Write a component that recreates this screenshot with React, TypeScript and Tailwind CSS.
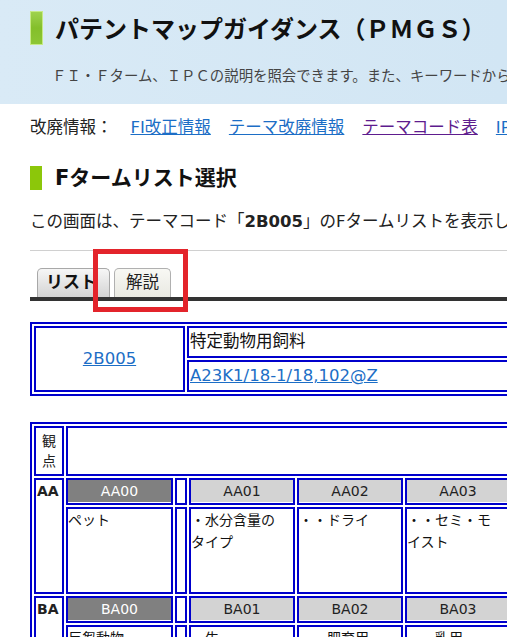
const cell = "border-2 border-[#0000cc] p-0";

const Box = ({ code, dark, w }: { code: string; dark?: boolean; w: number }) => (
  <div
    style={{ width: w }}
    className={
      "h-[22px] leading-[22px] text-center text-[14px] " +
      (dark ? "bg-[#808080] text-white" : "bg-[#d3d3d3] text-[#222]")
    }
  >
    {code}
  </div>
);

const widths = [103, 102, 102, 102, 102];

const ViewRow = ({
  label,
  codes,
  texts,
}: {
  label: string;
  codes: string[];
  texts: React.ReactNode[];
}) => (
  <>
    <tr>
      <td rowSpan={2} className={cell + " align-top"}>
        <div className="w-[26px] leading-[22px] font-bold text-[14px] pl-px">{label}</div>
      </td>
      {codes.map((c, i) => (
        <>
          <td key={c} className={cell + " align-top pb-px"}>
            <Box code={c} dark={i === 0} w={widths[i]} />
          </td>
          {i === 0 && (
            <td className={cell}>
              <div className="w-[8px]" />
            </td>
          )}
        </>
      ))}
    </tr>
    <tr>
      {texts.map((t, i) => (
        <>
          <td key={i} className={cell + " align-top"}>
            <div style={{ width: widths[i] }} className="h-[83px] text-[14px] leading-[22px] text-[#111]">
              {t}
            </div>
          </td>
          {i === 0 && (
            <td className={cell}>
              <div className="w-[8px]" />
            </td>
          )}
        </>
      ))}
    </tr>
  </>
);

export default function App() {
  return (
    <div
      className="relative w-full min-h-[637px] overflow-hidden bg-white text-[#222]"
      style={{ fontFamily: '"DejaVu Sans", "Noto Sans CJK JP", sans-serif' }}
    >
      {/* header */}
      <div className="h-[104px] bg-gradient-to-r from-[#d9eaf6] to-[#d2e6f4] pl-[30px] pt-[11px]">
        <div className="flex items-center h-[34px] whitespace-nowrap">
          <div className="w-[13px] h-[34px] border border-[#c6ea86] bg-gradient-to-b from-[#9fd24c] via-[#84bf2a] to-[#8cc634] shrink-0" />
          <h1 className="ml-[12px] text-[24px] font-bold leading-[34px] text-[#111]" style={{ fontFamily: '"Noto Sans CJK JP", sans-serif' }}>
            パテントマップガイダンス（ＰＭＧＳ）
          </h1>
          <svg width="20" height="20" viewBox="0 0 20 20" className="ml-[24px] shrink-0">
            <polygon points="0,10 10,2 20,10 10,18" fill="#73b62e" />
          </svg>
        </div>
        <p className="mt-[20px] ml-[22px] text-[14.4px] leading-[20px] text-[#444] whitespace-nowrap" style={{ fontFamily: '"Noto Sans CJK JP", sans-serif' }}>
          ＦＩ・Ｆターム、ＩＰＣの説明を照会できます。また、キーワードから検索することもできます。
        </p>
      </div>

      <div className="pl-[30px] text-[16.5px]">
        {/* change info links */}
        <div className="mt-[12px] flex gap-[18px] leading-[24px] whitespace-nowrap">
          <span>改廃情報：</span>
          <a href="#" className="text-[#1c6ec6] underline">FI改正情報</a>
          <a href="#" className="text-[#1c6ec6] underline">テーマ改廃情報</a>
          <a href="#" className="text-[#5e1c8e] underline">テーマコード表</a>
          <a href="#" className="text-[#1c6ec6] underline">IPC改正情報</a>
        </div>

        {/* section heading */}
        <div className="mt-[26px] flex items-center h-[24px] whitespace-nowrap">
          <div className="w-[12px] h-[24px] bg-[#8cc70a]" />
          <h2 className="ml-[13px] text-[21px] font-bold leading-[24px] text-[#111]">Fタームリスト選択</h2>
        </div>

        <p className="mt-[20px] leading-[24px] whitespace-nowrap">
          この画面は、テーマコード「<b>2B005</b>」のFタームリストを表示しています。
        </p>

        <div className="mt-[16px] border-t border-[#d0d0d0]" />

        {/* tabs */}
        <div className="mt-[17px] flex items-end gap-[4px] pl-[7px] h-[29px]">
          <div className="h-[29px] w-[73px] rounded-t-[5px] border border-b-0 border-[#a8a8a8] bg-gradient-to-b from-[#f6f6f6] to-[#d4d4d4] flex items-center justify-center">
            <span className="font-bold text-[17px] text-[#111] pr-[4px]">リスト</span>
          </div>
          <div className="h-[29px] w-[57px] rounded-t-[5px] border border-b-0 border-[#b0b0b0] bg-gradient-to-b from-[#f8f8f4] to-[#e9e9e2] flex items-center justify-center">
            <span className="text-[16.5px] text-[#222]">解説</span>
          </div>
        </div>
        <div className="h-[4px] bg-[#333]" />

        {/* theme table */}
        <table className="mt-[21px] border-2 border-[#0000cc] border-separate border-spacing-[2px]">
          <tbody>
            <tr>
              <td rowSpan={2} className={cell + " align-middle"}>
                <div className="w-[147px] text-center">
                  <a href="#" className="text-[#1c6ec6] underline">2B005</a>
                </div>
              </td>
              <td className={cell}>
                <div className="w-[420px] h-[28px] leading-[28px] pl-px text-[#111]">特定動物用飼料</div>
              </td>
            </tr>
            <tr>
              <td className={cell}>
                <div className="w-[420px] h-[28px] leading-[28px] pl-px">
                  <a href="#" className="text-[#1c6ec6] underline">A23K1/18-1/18,102@Z</a>
                </div>
              </td>
            </tr>
          </tbody>
        </table>

        {/* F-term list */}
        <table className="mt-[26px] border-2 border-[#0000cc] border-separate border-spacing-[2px]">
          <tbody>
            <tr>
              <td className={cell + " align-middle"}>
                <div className="w-[26px] text-center text-[14px] leading-[20px]">観<br />点</div>
              </td>
              <td colSpan={6} className={cell}>
                <div className="h-[46px]" />
              </td>
            </tr>
            <ViewRow
              label="AA"
              codes={["AA00", "AA01", "AA02", "AA03", "AA04"]}
              texts={["ペット", <>・水分含量の<br />タイプ</>, "・・ドライ", <>・・セミ・モ<br />イスト</>, "・・ウェット"]}
            />
            <ViewRow
              label="BA"
              codes={["BA00", "BA01", "BA02", "BA03", "BA04"]}
              texts={["反芻動物", "・牛", "・・肥育用", "・・乳用", "・・子牛用"]}
            />
          </tbody>
        </table>
      </div>

      {/* red annotation box */}
      <div className="absolute left-[93px] top-[249px] w-[95px] h-[63px] border-[5px] border-[#e3242b]" />
    </div>
  );
}
